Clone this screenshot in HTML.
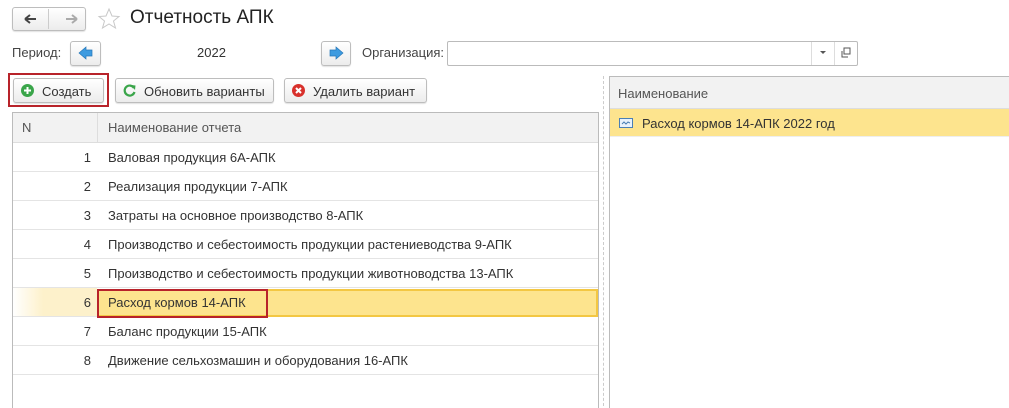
<!DOCTYPE html><html style="width:1009px;height:408px;overflow:hidden"><head><meta charset="utf-8"><style>
*{box-sizing:border-box;margin:0;padding:0}
body{width:1009px;height:408px;overflow:hidden;background:#fff;font-family:"Liberation Sans",sans-serif;font-size:13px;color:#333;position:relative}
.a{position:absolute}
.btn{position:absolute;border:1px solid #bdbdbd;border-radius:3px;background:linear-gradient(#fff,#ececec);box-shadow:0 1px 1px rgba(0,0,0,.12)}
.row{position:absolute;left:13px;width:585px;height:29px;border-bottom:1px solid #e4e4e4}
.row .n{position:absolute;right:507px;top:7px}
.row .t{position:absolute;left:95px;top:7px}
</style></head><body>
<div class="btn" style="left:12px;top:7px;width:74px;height:24px"></div>
<div class="a" style="left:48px;top:9px;width:1px;height:20px;background:#ccc"></div>
<svg class="a" style="left:22px;top:12px" width="60" height="14"><path d="M3 7h11M3 7l5-4M3 7l5 4" stroke="#444" stroke-width="2" fill="none"/><path d="M44 7h11M55 7l-5-4M55 7l-5 4" stroke="#aaa" stroke-width="2" fill="none"/></svg>
<svg class="a" style="left:97px;top:7px" width="24" height="24"><path d="M12 2l3 7 7 .5-5.5 4.5 2 7-6.5-4-6.5 4 2-7L2 9.5 9 9z" fill="none" stroke="#c8c8c8"/></svg>
<div class="a" style="left:130px;top:7px;font-size:19px;color:#222">Отчетность АПК</div>
<div class="a" style="left:12px;top:45px;color:#444">Период:</div>
<div class="btn" style="left:70px;top:41px;width:31px;height:25px"></div>
<svg class="a" style="left:78px;top:46px" width="16" height="14"><path d="M1 7l7-6v3h6v6H8v3z" fill="#3d9be0" stroke="#2677b8" stroke-width=".7"/></svg>
<div class="a" style="left:197px;top:45px">2022</div>
<div class="btn" style="left:321px;top:41px;width:30px;height:25px"></div>
<svg class="a" style="left:328px;top:46px" width="16" height="14"><path d="M15 7L8 1v3H2v6h6v3z" fill="#3d9be0" stroke="#2677b8" stroke-width=".7"/></svg>
<div class="a" style="left:362px;top:45px;color:#444">Организация:</div>
<div class="a" style="left:447px;top:41px;width:411px;height:25px;border:1px solid #bbb;border-radius:2px"></div>
<div class="a" style="left:811px;top:42px;width:1px;height:23px;background:#ddd"></div>
<div class="a" style="left:834px;top:42px;width:1px;height:23px;background:#ddd"></div>
<div class="a" style="left:820px;top:51px;width:0;height:0;border-left:3px solid transparent;border-right:3px solid transparent;border-top:3px solid #555"></div>
<svg class="a" style="left:840px;top:47px" width="12" height="12"><rect x="4" y="1" width="6" height="6" fill="none" stroke="#555"/><path d="M2 4v6h6" fill="none" stroke="#555"/></svg>
<div class="a" style="left:8px;top:73px;width:101px;height:34px;border:2px solid #b8232a"></div>
<div class="btn" style="left:13px;top:78px;width:91px;height:25px"></div>
<svg class="a" style="left:20px;top:83px" width="15" height="15"><circle cx="7.5" cy="7.5" r="6.5" fill="#3aa54a"/><path d="M7.5 4v7M4 7.5h7" stroke="#fff" stroke-width="2"/></svg>
<div class="a" style="left:42px;top:84px">Создать</div>
<div class="btn" style="left:115px;top:78px;width:159px;height:25px"></div>
<svg class="a" style="left:122px;top:83px" width="15" height="15"><path d="M12 5A5 5 0 1 0 12.5 9" fill="none" stroke="#3aa54a" stroke-width="2.2"/><path d="M9 2l4.5 .5-.5 4.5z" fill="#3aa54a"/></svg>
<div class="a" style="left:144px;top:84px">Обновить варианты</div>
<div class="btn" style="left:284px;top:78px;width:143px;height:25px"></div>
<svg class="a" style="left:291px;top:83px" width="15" height="15"><circle cx="7.5" cy="7.5" r="6.5" fill="#d8312c"/><path d="M5 5l5 5M10 5l-5 5" stroke="#fff" stroke-width="2"/></svg>
<div class="a" style="left:313px;top:84px">Удалить вариант</div>
<div class="a" style="left:12px;top:112px;width:587px;height:310px;border:1px solid #bbb"></div>
<div class="a" style="left:13px;top:113px;width:585px;height:30px;background:#f2f2f2;border-bottom:1px solid #ddd"></div>
<div class="a" style="left:97px;top:113px;width:1px;height:30px;background:#ddd"></div>
<div class="a" style="left:22px;top:120px;color:#555">N</div>
<div class="a" style="left:108px;top:120px;color:#555">Наименование отчета</div>
<div class="row" style="top:143px"><span class="n">1</span><span class="t">Валовая продукция 6А-АПК</span></div>
<div class="row" style="top:172px"><span class="n">2</span><span class="t">Реализация продукции 7-АПК</span></div>
<div class="row" style="top:201px"><span class="n">3</span><span class="t">Затраты на основное производство 8-АПК</span></div>
<div class="row" style="top:230px"><span class="n">4</span><span class="t">Производство и себестоимость продукции растениеводства 9-АПК</span></div>
<div class="row" style="top:259px"><span class="n">5</span><span class="t">Производство и себестоимость продукции животноводства 13-АПК</span></div>
<div class="row" style="top:288px;background:linear-gradient(90deg,#fff 0,#fdf1cb 30px,#fdf1cb 84px,transparent 84px)"><span class="n">6</span></div>
<div class="a" style="left:97px;top:289px;width:501px;height:28px;background:#fde48e;border:2px solid #f3c743"></div>
<div class="a" style="left:97px;top:289px;width:171px;height:29px;border:2px solid #b8232a"></div>
<div class="a" style="left:108px;top:295px">Расход кормов 14-АПК</div>
<div class="row" style="top:317px"><span class="n">7</span><span class="t">Баланс продукции 15-АПК</span></div>
<div class="row" style="top:346px"><span class="n">8</span><span class="t">Движение сельхозмашин и оборудования 16-АПК</span></div>
<div class="a" style="left:603px;top:76px;width:0;height:340px;border-left:1px dashed #ccc"></div>
<div class="a" style="left:609px;top:76px;width:410px;height:350px;border:1px solid #bbb"></div>
<div class="a" style="left:610px;top:77px;width:400px;height:32px;background:#f2f2f2;border-bottom:1px solid #ddd"></div>
<div class="a" style="left:618px;top:86px;color:#555">Наименование</div>
<div class="a" style="left:610px;top:109px;width:400px;height:28px;background:#fde48e;border-bottom:1px solid #eee"></div>
<svg class="a" style="left:619px;top:118px" width="14" height="10"><rect x=".5" y=".5" width="13" height="9" fill="#e8f1fb" stroke="#4a7fb5"/><path d="M3 6l2-2 2 2 2-2 2 1" fill="none" stroke="#4a7fb5"/></svg>
<div class="a" style="left:642px;top:116px">Расход кормов 14-АПК 2022 год</div>
</body></html>
